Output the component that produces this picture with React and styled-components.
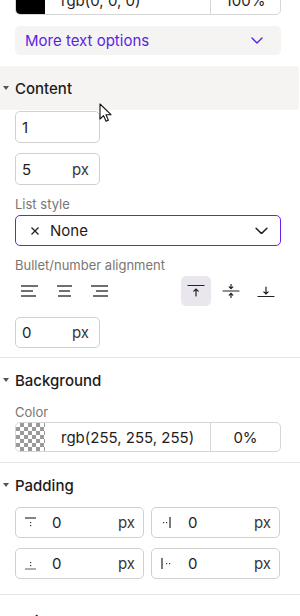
import React from "react";
import styled, { createGlobalStyle } from "styled-components";

const Global = createGlobalStyle`
  html, body { margin: 0; padding: 0; background: #fff; }
  body { font-family: Inter, "Noto Sans", sans-serif; color: #1f1d1d; overflow: hidden; }
  * { box-sizing: border-box; }
`;

const Panel = styled.div`
  width: 300px;
  height: 616px;
  overflow: hidden;
  position: relative;
`;

const Scroll = styled.div`
  margin-top: -15px;
  display: flex;
  flex-direction: column;
`;

const Indent = styled.div`
  padding: 0 19px 0 15px;
  display: flex;
  flex-direction: column;
`;

const ColorRow = styled.div`
  display: grid;
  grid-template-columns: 29px 1fr 69px;
  height: 30px;
  border: 1px solid #d6d6d6;
  border-radius: 5px;
  overflow: hidden;
  font-size: 15px;
  margin-top: ${(p) => p.$mt || 0}px;
`;

const Swatch = styled.div`
  background: ${(p) =>
    p.$checker
      ? "repeating-conic-gradient(#9a9a9a 0% 25%, #ffffff 0% 50%) 0 0 / 8px 8px"
      : p.$color};
  border-radius: 4px 0 0 4px;
`;

const ColorText = styled.div`
  display: flex;
  align-items: center;
  padding-left: 16px;
  border-right: 1px solid #d6d6d6;
`;

const Alpha = styled.div`
  display: flex;
  align-items: center;
  justify-content: center;
`;

const MoreButton = styled.div`
  margin-top: 11px;
  height: 29px;
  border-radius: 5px;
  background: #f5f4f2;
  display: flex;
  align-items: center;
  justify-content: space-between;
  padding: 0 18px 0 10px;
  color: #5b1fe4;
  font-size: 15px;
`;

const SectionHeader = styled.div`
  margin-top: ${(p) => p.$mt || 0}px;
  height: ${(p) => p.$h || 44}px;
  display: flex;
  align-items: center;
  gap: 6px;
  padding-left: 3px;
  font-size: 15px;
  font-weight: 500;
  color: #1f1b1b;
  background: ${(p) => (p.$active ? "#f5f4f2" : "transparent")};
  border-radius: 0 4px 4px 0;
  margin-right: ${(p) => (p.$active ? 1 : 0)}px;
`;

const Caret = styled.span`
  width: 0;
  height: 0;
  border-left: 3.5px solid transparent;
  border-right: 3.5px solid transparent;
  border-top: 4px solid #555;
`;

const Input = styled.div`
  margin-top: ${(p) => p.$mt || 0}px;
  width: ${(p) => p.$w || 85}px;
  height: ${(p) => p.$h || 32}px;
  border: 1px solid #d0d0d0;
  border-radius: 5px;
  display: flex;
  align-items: center;
  padding: 0 10px 0 6px;
  font-size: 15px;
  color: #1f1b1b;
  gap: 8px;
`;

const InputValue = styled.span`
  flex: 1;
`;

const Unit = styled.span`
  color: #3a3535;
`;

const Label = styled.div`
  margin-top: ${(p) => p.$mt || 0}px;
  font-size: 13px;
  color: #7b7571;
  line-height: 16px;
`;

const Select = styled.div`
  margin-top: 3px;
  height: 31px;
  border: 1px solid #6a24e9;
  border-radius: 5px;
  display: flex;
  align-items: center;
  padding: 0 12px 0 14px;
  font-size: 15px;
  color: #1f1b1b;
`;

const SelectText = styled.span`
  flex: 1;
  display: flex;
  align-items: center;
  gap: 10px;
`;

const AlignRow = styled.div`
  margin-top: 3px;
  height: 30px;
  display: flex;
  align-items: center;
`;

const AlignGroup = styled.div`
  display: flex;
  align-items: center;
  gap: ${(p) => p.$gap}px;
  margin-left: ${(p) => p.$ml || 0}px;
`;

const IconBtn = styled.div`
  width: ${(p) => p.$w || 30}px;
  height: 30px;
  border-radius: 5px;
  display: flex;
  align-items: center;
  justify-content: center;
  background: ${(p) => (p.$selected ? "#e9e7ed" : "transparent")};
`;

const Divider = styled.div`
  margin-top: ${(p) => p.$mt || 0}px;
  height: 1px;
  background: #e6e4e2;
`;

const PadGrid = styled.div`
  margin-top: 0;
  display: grid;
  grid-template-columns: 129px 129px;
  column-gap: 7px;
  row-gap: 10px;
`;

const PadInput = styled.div`
  height: 31px;
  border: 1px solid #d0d0d0;
  border-radius: 5px;
  display: flex;
  align-items: center;
  padding: 0 8px 0 8px;
  font-size: 15px;
  color: #1f1b1b;
`;

const PadIcon = styled.span`
  width: 20px;
  display: flex;
  align-items: center;
  margin-right: 8px;
`;

const Cursor = styled.svg`
  position: absolute;
  left: 99px;
  top: 103px;
`;

const Chevron = ({ color = "#5b1fe4", w = 12 }) => (
  <svg width={w} height={w * 0.6} viewBox="0 0 12 7" fill="none">
    <path d="M1 1l5 5 5-5" stroke={color} strokeWidth="1.4" strokeLinecap="round" strokeLinejoin="round" />
  </svg>
);

const LinesIcon = ({ type }) => {
  const rows = {
    left: [[0, 17], [0, 12], [0, 15]],
    center: [[1, 16], [3, 14], [2, 15]],
    right: [[0, 17], [5, 17], [2, 17]],
  }[type];
  return (
    <svg width="18" height="12" viewBox="0 0 18 12">
      {rows.map(([a, b], i) => (
        <line key={i} x1={a} x2={b} y1={1 + i * 5} y2={1 + i * 5} stroke="#222" strokeWidth="1.3" />
      ))}
    </svg>
  );
};

const VAlignIcon = ({ type }) => (
  <svg width="18" height="14" viewBox="0 0 18 14" fill="none" stroke="#222" strokeWidth="1.2" strokeLinecap="round">
    {type === "top" && (
      <>
        <line x1="1" x2="17" y1="1.5" y2="1.5" />
        <path d="M9 12V5M6.8 7.2L9 5l2.2 2.2" />
      </>
    )}
    {type === "middle" && (
      <>
        <line x1="1" x2="17" y1="7" y2="7" />
        <path d="M9 0.5v4M7.2 2.8L9 4.6l1.8-1.8" />
        <path d="M9 13.5v-4M7.2 11.2L9 9.4l1.8 1.8" />
      </>
    )}
    {type === "bottom" && (
      <>
        <line x1="1" x2="17" y1="12.5" y2="12.5" />
        <path d="M9 3v7M6.8 7.8L9 10l2.2-2.2" />
      </>
    )}
  </svg>
);

const PadSideIcon = ({ side }) => (
  <svg width="14" height="14" viewBox="0 0 14 14">
    {side === "top" && (
      <>
        <line x1="1" x2="12" y1="2" y2="2" stroke="#333" strokeWidth="1.2" />
        <rect x="6" y="6" width="1.2" height="1.2" fill="#333" />
        <rect x="6" y="9" width="1.2" height="1.2" fill="#333" />
      </>
    )}
    {side === "bottom" && (
      <>
        <line x1="1" x2="12" y1="12" y2="12" stroke="#777" strokeWidth="1.2" />
        <rect x="6" y="5" width="1.2" height="1.2" fill="#333" />
        <rect x="6" y="8" width="1.2" height="1.2" fill="#333" />
      </>
    )}
    {side === "right" && (
      <>
        <line x1="10" x2="10" y1="1" y2="12" stroke="#333" strokeWidth="1.3" />
        <rect x="3" y="6" width="1.2" height="1.2" fill="#333" />
        <rect x="6" y="6" width="1.2" height="1.2" fill="#333" />
      </>
    )}
    {side === "left" && (
      <>
        <line x1="2" x2="2" y1="1" y2="12" stroke="#333" strokeWidth="1.3" />
        <rect x="6" y="6" width="1.2" height="1.2" fill="#333" />
        <rect x="9" y="6" width="1.2" height="1.2" fill="#333" />
      </>
    )}
  </svg>
);

const PadField = ({ side }) => (
  <PadInput>
    <PadIcon>
      <PadSideIcon side={side} />
    </PadIcon>
    <InputValue>0</InputValue>
    <Unit>px</Unit>
  </PadInput>
);

export default function App() {
  return (
    <Panel>
      <Global />
      <Scroll>
        <Indent>
          <ColorRow>
            <Swatch $color="#000" />
            <ColorText>rgb(0, 0, 0)</ColorText>
            <Alpha>100%</Alpha>
          </ColorRow>
          <MoreButton>
            <span>More text options</span>
            <Chevron />
          </MoreButton>
        </Indent>

        <SectionHeader $active $mt={11}>
          <Caret />
          Content
        </SectionHeader>
        <Indent>
          <Input $mt={1}>
            <InputValue>1</InputValue>
          </Input>
          <Input $mt={10}>
            <InputValue>5</InputValue>
            <Unit>px</Unit>
          </Input>
          <Label $mt={11}>List style</Label>
          <Select>
            <SelectText>
              <svg width="10" height="10" viewBox="0 0 10 10">
                <path d="M1.5 1.5l7 7M8.5 1.5l-7 7" stroke="#222" strokeWidth="1.3" />
              </svg>
              None
            </SelectText>
            <Chevron color="#222" w={13} />
          </Select>
          <Label $mt={11}>Bullet/number alignment</Label>
          <AlignRow>
            <AlignGroup $gap={5}>
              <IconBtn $w={30}><LinesIcon type="left" /></IconBtn>
              <IconBtn $w={30}><LinesIcon type="center" /></IconBtn>
              <IconBtn $w={30}><LinesIcon type="right" /></IconBtn>
            </AlignGroup>
            <AlignGroup $gap={5} $ml={66}>
              <IconBtn $selected><VAlignIcon type="top" /></IconBtn>
              <IconBtn><VAlignIcon type="middle" /></IconBtn>
              <IconBtn><VAlignIcon type="bottom" /></IconBtn>
            </AlignGroup>
          </AlignRow>
          <Input $mt={11} $h={31}>
            <InputValue>0</InputValue>
            <Unit>px</Unit>
          </Input>
        </Indent>
        <Divider $mt={9} />

        <SectionHeader $mt={0} $h={44}>
          <Caret />
          Background
        </SectionHeader>
        <Indent>
          <Label $mt={2}>Color</Label>
          <ColorRow $mt={2}>
            <Swatch $checker />
            <ColorText>rgb(255, 255, 255)</ColorText>
            <Alpha>0%</Alpha>
          </ColorRow>
        </Indent>
        <Divider $mt={10} />

        <SectionHeader $mt={0} $h={44}>
          <Caret />
          Padding
        </SectionHeader>
        <Indent>
          <PadGrid>
            <PadField side="top" />
            <PadField side="right" />
            <PadField side="bottom" />
            <PadField side="left" />
          </PadGrid>
        </Indent>
        <Divider $mt={15} />
        <SectionHeader $mt={0} $h={52}>
          <Caret />
          Adjust
        </SectionHeader>
      </Scroll>
      <Cursor width="14" height="20" viewBox="0 0 14 20">
        <path d="M1 1v15l3.6-3.4 2.4 5.6 2.4-1-2.4-5.5H12z" fill="#fff" stroke="#111" strokeWidth="1.1" strokeLinejoin="round" />
      </Cursor>
    </Panel>
  );
}
